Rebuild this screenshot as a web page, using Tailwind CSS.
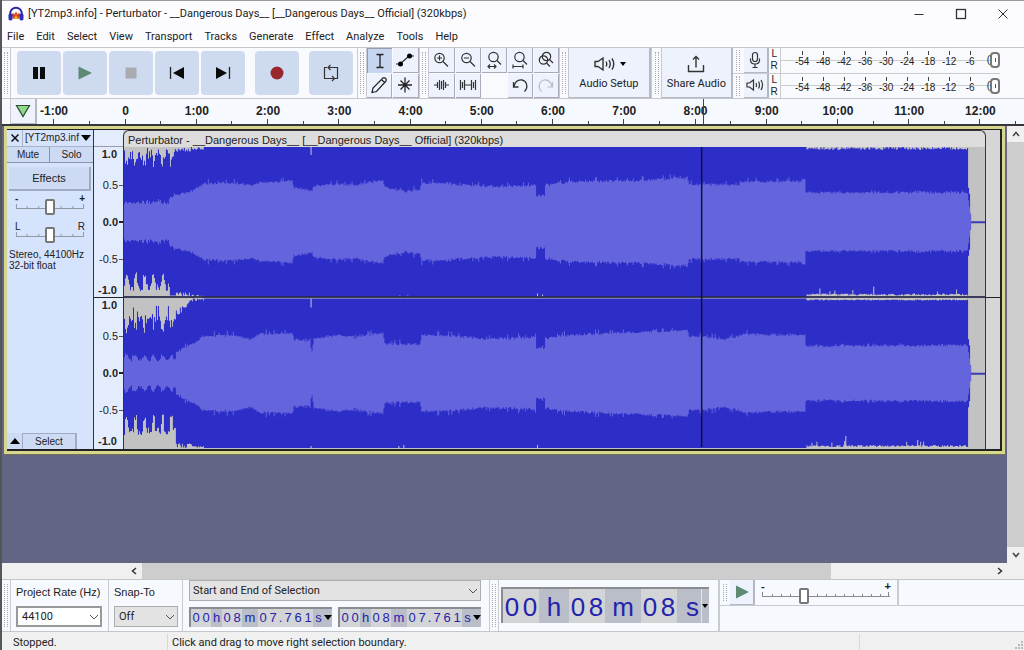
<!DOCTYPE html>
<html lang="en">
<head>
    <meta charset="UTF-8">
    <meta name="viewport" content="width=device-width, initial-scale=1.0">
    <title>[YT2mp3.info] - Perturbator - __Dangerous Days__</title>
    <script src="https://cdn.jsdelivr.net/npm/@tailwindcss/browser@4"></script>
</head>
<body class="h-screen flex flex-col overflow-hidden bg-[#fcfcfe] font-[Roboto,sans-serif] text-[11px] leading-4 text-[#222] border-l-2 border-[#55565c]">

<!-- Title bar -->
<header class="h-[27px] flex items-center shrink-0 border-t border-[#999]">
    <svg class="w-4 h-4 ml-1.5 mr-1" viewBox="0 0 16 16">
        <path d="M3 8h10v3l-2 2H5l-2-2z" fill="#f3a52c"/>
        <path d="M3 10l2-2 1 3 2-4 2 4 1-3 2 2" fill="none" stroke="#d8341f" stroke-width="1.3"/>
        <path d="M2.2 9V7.5a5.8 5.8 0 0 1 11.600 0V9" fill="none" stroke="#2326a0" stroke-width="2"/>
        <rect x="0.500" y="7.500" width="4" height="7" rx="1.800" fill="#2a2fc0"/>
        <rect x="11.500" y="7.500" width="4" height="7" rx="1.800" fill="#2a2fc0"/>
    </svg>
    <h1 class="flex-1 whitespace-nowrap">[YT2mp3.info] - Perturbator - __Dangerous Days__ [__Dangerous Days__ Official] (320kbps)</h1>
    <button class="w-[42px] h-full flex items-center justify-center" aria-label="Minimize"><svg class="w-3 h-3" viewBox="0 0 12 12"><path d="M1.500 6.500h9" stroke="#333" fill="none"/></svg></button>
    <button class="w-[42px] h-full flex items-center justify-center" aria-label="Maximize"><svg class="w-3 h-3" viewBox="0 0 12 12"><rect x="1.500" y="1.500" width="9" height="9" stroke="#333" stroke-width="1.300" fill="none"/></svg></button>
    <button class="w-[42px] h-full flex items-center justify-center" aria-label="Close"><svg class="w-3 h-3" viewBox="0 0 12 12"><path d="M1.500 1.500l9 9M10.500 1.500l-9 9" stroke="#333" fill="none"/></svg></button>
</header>

<!-- Menu -->
<nav class="h-5 flex items-center gap-3 pl-[5px] shrink-0">
    <button>File</button>
    <button>Edit</button>
    <button>Select</button>
    <button>View</button>
    <button>Transport</button>
    <button>Tracks</button>
    <button>Generate</button>
    <button>Effect</button>
    <button>Analyze</button>
    <button>Tools</button>
    <button>Help</button>
</nav>

<!-- Toolbars -->
<div class="h-[52px] flex shrink-0 border-y border-[#c4c6ca] bg-[#f9fafd]">
    <div class="w-[9px] border-r border-[#c9cbd0] flex justify-center py-1"><div class="w-1 border-x border-dotted border-[#aaa]"></div></div>
    <div class="flex gap-0.5 pl-1.5 items-center w-[348px]">
        <button class="w-11 h-11 rounded-sm bg-[#cedaf0] flex items-center justify-center" aria-label="Pause"><svg class="w-5 h-5" viewBox="0 0 20 20"><path d="M4 4h5v12H4zM11 4h5v12h-5z" fill="#0a0a0a"/></svg></button>
        <button class="w-11 h-11 rounded-sm bg-[#cedaf0] flex items-center justify-center" aria-label="Play"><svg class="w-5 h-5" viewBox="0 0 20 20"><path d="M3.500 3.500L17 10 3.500 16.500z" fill="#5d8a74"/></svg></button>
        <button class="w-11 h-11 rounded-sm bg-[#cedaf0] flex items-center justify-center" aria-label="Stop"><svg class="w-5 h-5" viewBox="0 0 20 20"><path d="M4.500 4.500h11v11h-11z" fill="#a9abb1"/></svg></button>
        <button class="w-11 h-11 rounded-sm bg-[#cedaf0] flex items-center justify-center" aria-label="Skip to start"><svg class="w-5 h-5" viewBox="0 0 20 20"><path d="M3.500 4v12" stroke="#222" stroke-width="1.300"/><path d="M17 4v12L6 10z" fill="#0a0a0a"/></svg></button>
        <button class="w-11 h-11 rounded-sm bg-[#cedaf0] flex items-center justify-center" aria-label="Skip to end"><svg class="w-5 h-5" viewBox="0 0 20 20"><path d="M16.500 4v12" stroke="#222" stroke-width="1.300"/><path d="M3 4v12l11-6z" fill="#0a0a0a"/></svg></button>
        <button class="w-11 h-11 rounded-sm bg-[#cedaf0] flex items-center justify-center ml-2" aria-label="Record"><svg class="w-5 h-5" viewBox="0 0 20 20"><circle cx="10" cy="10" r="6.500" fill="#98282b"/></svg></button>
        <button class="w-11 h-11 rounded-sm bg-[#cedaf0] flex items-center justify-center ml-2" aria-label="Loop"><svg class="w-5 h-5" viewBox="0 0 20 20" fill="none" stroke="#333" stroke-width="1.200"><path d="M6 4.500H3.500v11H13M7.500 4.500h9v11H14M9.500 2L7 4.500 9.500 7M11 13l2.500 2.500L11 18"/></svg></button>
    </div>
    <div class="w-[10px] border-x border-[#c9cbd0] flex justify-center py-1"><div class="w-1 border-x border-dotted border-[#aaa]"></div></div>

    <!-- Tools -->
    <div class="grid grid-cols-2 grid-rows-2 gap-px w-[52px]">
        <button class="flex items-center justify-center bg-[#c6d5f0] border-t border-l border-[#99a]" aria-label="Selection tool"><svg class="w-5 h-5" viewBox="0 0 20 20" fill="none" stroke="#222" stroke-width="1.300"><path d="M6.500 3.500h2.500l1 1 1-1h2.500M6.500 16.500h2.500l1-1 1 1h2.500M10 4.500v11"/></svg></button>
        <button class="flex items-center justify-center bg-[#edf2fd] border-r border-b border-[#aab]" aria-label="Envelope tool"><svg class="w-5 h-5" viewBox="0 0 20 20"><path d="M1 14h4l9-8h5" stroke="#222" stroke-width="1.200" fill="none"/><circle cx="5.500" cy="14" r="2.500"/><circle cx="14.500" cy="6" r="2.500"/></svg></button>
        <button class="flex items-center justify-center bg-[#edf2fd] border-r border-b border-[#aab]" aria-label="Draw tool"><svg class="w-5 h-5" viewBox="0 0 20 20" fill="none" stroke="#222" stroke-width="1.200"><path d="M3 17.500l1-4.500L14 3q1-.8 2 0l1 1q.8 1 0 2L7.500 16.500zM12.500 4.500L15.500 7.500"/></svg></button>
        <button class="flex items-center justify-center bg-[#edf2fd] border-r border-b border-[#aab]" aria-label="Multi-tool"><svg class="w-5 h-5" viewBox="0 0 20 20" fill="none" stroke="#222" stroke-width="1.300"><path d="M10 2.500v15M3 10h14M5.500 5.500l9 9M14.500 5.500l-9 9"/></svg></button>
    </div>
    <div class="w-[11px] border-x border-[#c9cbd0] flex justify-center py-1"><div class="w-1 border-x border-dotted border-[#aaa]"></div></div>

    <!-- Edit -->
    <div class="grid grid-cols-5 grid-rows-2 gap-px w-[130px]">
        <button class="flex items-center justify-center bg-[#edf2fd] border-r border-b border-[#aab]" aria-label="Zoom in"><svg class="w-5 h-5" viewBox="0 0 20 20" fill="none" stroke="#333" stroke-width="1.200"><circle cx="8.500" cy="8" r="4.700"/><path d="M12 11.500l5 5M6 8h5M8.500 5.500v5"/></svg></button>
        <button class="flex items-center justify-center bg-[#edf2fd] border-r border-b border-[#aab]" aria-label="Zoom out"><svg class="w-5 h-5" viewBox="0 0 20 20" fill="none" stroke="#333" stroke-width="1.200"><circle cx="8.500" cy="8" r="4.700"/><path d="M12 11.500l5 5M6 8h5"/></svg></button>
        <button class="flex items-center justify-center bg-[#edf2fd] border-r border-b border-[#aab]" aria-label="Fit selection"><svg class="w-5 h-5" viewBox="0 0 20 20" fill="none" stroke="#333" stroke-width="1.200"><circle cx="9.500" cy="7" r="4.700"/><path d="M13 10.500l4 4M4 16.500h8M6 14.500l-2 2 2 2M10 14.500l2 2-2 2"/></svg></button>
        <button class="flex items-center justify-center bg-[#edf2fd] border-r border-b border-[#aab]" aria-label="Fit project"><svg class="w-5 h-5" viewBox="0 0 20 20" fill="none" stroke="#333" stroke-width="1.200"><circle cx="9.500" cy="7" r="4.700"/><path d="M13 10.500l4 4M3 16.500h10M3 14.500v4M13 14.500v4"/></svg></button>
        <button class="flex items-center justify-center bg-[#edf2fd] border-r border-b border-[#aab]" aria-label="Zoom toggle"><svg class="w-5 h-5" viewBox="0 0 20 20" fill="none" stroke="#333" stroke-width="1.200"><circle cx="7.500" cy="10" r="4.200"/><circle cx="10.500" cy="6.500" r="4.200"/><path d="M10.500 13l3.500 3.500M13.500 9.500L17 13"/></svg></button>
        <button class="flex items-center justify-center bg-[#edf2fd] border-r border-b border-[#aab]" aria-label="Trim"><svg class="w-5 h-5" viewBox="0 0 20 20" fill="none" stroke="#333" stroke-width="1.200"><path d="M3 10h3M14 10h4M6.500 7v6M8.500 5v10M10.500 6v8M12.500 5v10M14.500 7v6"/></svg></button>
        <button class="flex items-center justify-center bg-[#edf2fd] border-r border-b border-[#aab]" aria-label="Silence"><svg class="w-5 h-5" viewBox="0 0 20 20" fill="none" stroke="#333" stroke-width="1.200"><path d="M2.500 5v10M4.500 7v6M6.500 5v10M6.500 10h7M13.500 5v10M15.500 7v6M17.500 5v10"/></svg></button>
        <span></span>
        <button class="flex items-center justify-center bg-[#edf2fd] border-r border-b border-[#aab]" aria-label="Undo"><svg class="w-5 h-5" viewBox="0 0 20 20" fill="none" stroke="#333" stroke-width="1.300"><path d="M3.500 7v5h5M4 11.500C5 7 8 4.500 12 5c5 1 6.500 7.500 2.500 11.500"/></svg></button>
        <button class="flex items-center justify-center bg-[#edf2fd] border-r border-b border-[#aab]" aria-label="Redo"><svg class="w-5 h-5" viewBox="0 0 20 20" fill="none" stroke="#b9bcc4" stroke-width="1.200"><path d="M16.500 7v5h-5M16 11.500C15 7 12 4.500 8 5c-5 1-6.500 7.500-2.500 11.500"/></svg></button>
    </div>
    <div class="w-[10px] border-x border-[#c9cbd0] flex justify-center py-1"><div class="w-1 border-x border-dotted border-[#aaa]"></div></div>
    <button class="w-[83px] bg-[#edf2fd] border-r-2 border-b border-[#b4b8c4] flex flex-col items-center justify-center gap-0.5">
        <span class="flex items-center gap-1"><svg class="w-6 h-5" viewBox="0 0 24 20" fill="none" stroke="#333" stroke-width="1.400"><path d="M3 7.500h3L11 4v12l-5-3.500H3zM14 7.500q1.500 2.500 0 5M17 6q2.500 4 0 8M20 4.500q3.500 5.500 0 11"/></svg><svg class="w-1.5 h-1.5" viewBox="0 0 6 6"><path d="M0 1h6L3 5z"/></svg></span>
        <span>Audio Setup</span>
    </button>
    <div class="w-[11px] border-x border-[#c9cbd0] flex justify-center py-1"><div class="w-1 border-x border-dotted border-[#aaa]"></div></div>
    <button class="w-[71px] bg-[#edf2fd] border-r-2 border-b border-[#b4b8c4] flex flex-col items-center justify-center gap-0.5">
        <svg class="w-5 h-5" viewBox="0 0 20 20" fill="none" stroke="#333" stroke-width="1.400"><path d="M2.500 11v6.500h15V11M10 13.500V2.500M7 5.500l3-3 3 3"/></svg>
        <span class="whitespace-nowrap">Share Audio</span>
    </button>

    <!-- Meters -->
    <div class="flex-1 flex flex-col pr-6">
        <div class="flex-1 flex border-b border-[#c9cbd0]">
            <div class="w-[11px] flex justify-center py-0.5"><div class="w-1 border-x border-dotted border-[#aaa]"></div></div>
            <button class="w-[25px] bg-[#edf2fd] border-r-2 border-b border-[#b4b8c4] flex items-center justify-center" aria-label="Record meter"><svg class="w-5 h-5" viewBox="0 0 20 20" fill="none" stroke="#333" stroke-width="1.200"><rect x="7.500" y="2.500" width="5" height="9" rx="2.500"/><path d="M5.500 8.500v1.500q0 4 4.500 4t4.500-4V8.500M10 14v3M7.500 17.500h5"/></svg></button>
            <span class="w-[11px] flex flex-col justify-center text-center font-['Liberation_Sans',sans-serif] text-[10px] leading-[12px]"><span>L</span><span>R</span></span>
            <div class="meter flex-1 grid items-center border-l border-[#ccc]"></div>
        </div>
        <div class="flex-1 flex">
            <div class="w-[11px] flex justify-center py-0.5"><div class="w-1 border-x border-dotted border-[#aaa]"></div></div>
            <button class="w-[25px] bg-[#edf2fd] border-r-2 border-b border-[#b4b8c4] flex items-center justify-center" aria-label="Playback meter"><svg class="w-5 h-5" viewBox="0 0 20 20" fill="none" stroke="#333" stroke-width="1.200"><path d="M2 8h2.500L8.500 5v10l-4-3H2zM11 8q1 2 0 4M13.500 6.500q2 3.500 0 7M16 5q3 5 0 10"/></svg></button>
            <span class="w-[11px] flex flex-col justify-center text-center font-['Liberation_Sans',sans-serif] text-[10px] leading-[12px]"><span>L</span><span>R</span></span>
            <div class="meter flex-1 grid items-center border-l border-[#ccc]"></div>
        </div>
    </div>
</div>

<!-- Timeline ruler -->
<div class="relative h-[27px] flex shrink-0 bg-[#f6f9fe] border-b-2 border-[#35363b] font-['Liberation_Sans',sans-serif] font-bold text-[12px]">
    <div class="w-[9px] border-r border-[#c9cbd0]"></div>
    <button class="w-[26px] flex items-center justify-center bg-[#edf2fd] border-r-2 border-b border-[#b4b8c4]" aria-label="Timeline options"><svg class="w-4 h-4" viewBox="0 0 16 16"><path d="M1.500 2.500h13L8 13.500z" fill="#8fd98a" stroke="#2c4a30" stroke-width="1.200"/></svg></button>
    <div id="timeline" class="flex-1 flex pr-2"></div>
    <div class="absolute inset-y-0 left-[68.6%] w-px bg-[#444]"></div>
</div>

<!-- Tracks -->
<main class="flex-1 flex min-h-0 bg-[#636585]">
    <div class="flex-1 min-w-0">
        <section class="ml-0.5 mr-0.5 flex h-[328px] border-3 border-[#d6d78c] bg-[#d6d6d6] font-['Liberation_Sans',sans-serif] outline outline-[#6e6f55]">
            <div class="flex-1 flex border-y border-r-2 border-[#222] border-b-2 min-w-0">
                <!-- Track controls -->
                <div class="w-[87px] bg-[#d6e3fd] flex flex-col text-[10px] leading-3 border-r border-[#333]">
                    <div class="h-[17px] flex border-b border-[#aab4c8]">
                        <button class="w-4 flex items-center justify-center border-r border-[#aab4c8]" aria-label="Close track"><svg class="w-2 h-2" viewBox="0 0 8 8"><path d="M.5.5l7 7M7.500.5l-7 7" stroke="#111" stroke-width="1.500"/></svg></button>
                        <button class="flex-1 flex items-center justify-between pl-0.5 pr-0.5 whitespace-nowrap">[YT2mp3.inf <svg class="w-2.5 h-1.5" viewBox="0 0 10 6"><path d="M0 0h10L5 6z"/></svg></button>
                    </div>
                    <div class="h-4 grid grid-cols-2 border-b border-[#8c95a8] bg-[#cddaf3]">
                        <button class="border-r border-[#8c95a8]">Mute</button>
                        <button>Solo</button>
                    </div>
                    <button class="mt-1 ml-0.5 mr-0.5 h-6 bg-[#cddaf3] border-r-2 border-b-2 border-[#9fabc4] text-[11px]">Effects</button>
                    <label class="mt-1 mx-2 grid grid-rows-[4px_16px]">
                        <span class="flex justify-between font-bold leading-2"><span>-</span><span>+</span></span>
                        <span class="grid items-center">
                            <svg class="[grid-area:1/1] w-full h-4" viewBox="0 0 72 16" preserveAspectRatio="none"><path d="M1 9.500h70M1.500 5v4M12.500 7v2M24.500 7v2M47.500 7v2M59.500 7v2M70.500 5v4" stroke="#8f97a8" fill="none"/></svg>
                            <input type="range" value="50" aria-label="Gain" class="[grid-area:1/1] w-full h-4 appearance-none bg-transparent [&::-webkit-slider-thumb]:appearance-none [&::-webkit-slider-thumb]:w-2.5 [&::-webkit-slider-thumb]:h-4 [&::-webkit-slider-thumb]:bg-white [&::-webkit-slider-thumb]:border-2 [&::-webkit-slider-thumb]:border-[#777] [&::-webkit-slider-thumb]:rounded-xs">
                        </span>
                    </label>
                    <label class="mt-2 mx-2 grid grid-rows-[4px_16px]">
                        <span class="flex justify-between leading-2"><span>L</span><span>R</span></span>
                        <span class="grid items-center">
                            <svg class="[grid-area:1/1] w-full h-4" viewBox="0 0 72 16" preserveAspectRatio="none"><path d="M1 9.500h70M1.500 5v4M12.500 7v2M24.500 7v2M47.500 7v2M59.500 7v2M70.500 5v4" stroke="#8f97a8" fill="none"/></svg>
                            <input type="range" value="50" aria-label="Pan" class="[grid-area:1/1] w-full h-4 appearance-none bg-transparent [&::-webkit-slider-thumb]:appearance-none [&::-webkit-slider-thumb]:w-2.5 [&::-webkit-slider-thumb]:h-4 [&::-webkit-slider-thumb]:bg-white [&::-webkit-slider-thumb]:border-2 [&::-webkit-slider-thumb]:border-[#777] [&::-webkit-slider-thumb]:rounded-xs">
                        </span>
                    </label>
                    <p class="mt-1.5 pl-0.5 leading-[11px] whitespace-nowrap">Stereo, 44100Hz<br>32-bit float</p>
                    <div class="mt-auto h-4 flex">
                        <button class="w-4 flex items-center justify-center border-r border-[#9fabc4] bg-[#cddaf3]" aria-label="Collapse"><svg class="w-2.5 h-1.5" viewBox="0 0 10 6"><path d="M0 6h10L5 0z"/></svg></button>
                        <button class="w-[54px] bg-[#cddaf3] border-r-2 border-t border-[#9fabc4]">Select</button>
                    </div>
                </div>
                <!-- Amplitude ruler -->
                <div class="w-[29px] bg-[#e3ecfd] flex flex-col text-[11px]">
                    <div class="h-[17px] border-b border-[#99a]"></div>
                    <div class="vruler h-[151px] border-b border-[#222]"></div>
                    <div class="vruler flex-1"></div>
                </div>
                <!-- Clip -->
                <div class="flex-1 min-w-0 flex flex-col rounded-t-md border-x border-t border-[#333] bg-[#dcdcdc] overflow-hidden">
                    <div class="h-4 pl-1 text-[11px] leading-[18px] whitespace-nowrap">Perturbator - __Dangerous Days__ [__Dangerous Days__ Official] (320kbps)</div>
                    <svg id="wave" class="w-full flex-1 min-h-0 bg-[#c2c2c2]" viewBox="0 0 863 303" preserveAspectRatio="none">
                        <path id="peaks" fill="#2d2dc8"/>
                        <path id="rms" fill="#6464dc"/>
                        <path d="M849 75.500h14M849 227.500h14" stroke="#3a3cb4" stroke-width="2"/>
                        <path id="flecks" stroke="#c6c8d8" fill="none"/>
                        <path d="M0 150.500h863M579 0v301" stroke="#11113a" stroke-width="1.500"/>
                    </svg>
                </div>
                <div class="w-[14px] flex flex-col"><div class="h-[168px] border-b border-[#222]"></div></div>
            </div>
        </section>
    </div>
    <div class="w-[17px] bg-[#f0f0f0] flex flex-col shrink-0">
        <button class="h-4 flex items-center justify-center" aria-label="Scroll up"><svg class="w-2 h-2" viewBox="0 0 8 8"><path d="M1 6l3-3.500L7 6" stroke="#444" stroke-width="1.500" fill="none"/></svg></button>
        <div class="flex-1 bg-[#cdcdcd]"></div>
        <button class="h-4 flex items-center justify-center" aria-label="Scroll down"><svg class="w-2 h-2" viewBox="0 0 8 8"><path d="M1 2l3 3.500L7 2" stroke="#444" stroke-width="1.500" fill="none"/></svg></button>
    </div>
</main>

<!-- Horizontal scrollbar -->
<div class="h-4 flex shrink-0 bg-[#f0f0f0] pl-[124px] pr-4">
    <button class="w-4 flex items-center justify-center" aria-label="Scroll left"><svg class="w-2 h-2" viewBox="0 0 8 8"><path d="M6 1L2.500 4 6 7" stroke="#333" stroke-width="1.500" fill="none"/></svg></button>
    <div class="flex-1 flex"><div class="w-[81%] bg-[#cdcdcd]"></div></div>
    <button class="w-4 flex items-center justify-center" aria-label="Scroll right"><svg class="w-2 h-2" viewBox="0 0 8 8"><path d="M2 1l3.500 3L2 7" stroke="#333" stroke-width="1.500" fill="none"/></svg></button>
</div>

<!-- Bottom toolbars -->
<div class="h-[53px] flex shrink-0 border-y border-[#c4c6ca] bg-[#f6f9fe]">
    <div class="w-[9px] border-r border-[#c9cbd0] flex justify-center py-1"><div class="w-1 border-x border-dotted border-[#aaa]"></div></div>
    <div class="w-[92px] ml-[5px] flex flex-col justify-between pt-1 pb-1">
        <label for="rate" class="whitespace-nowrap font-['Liberation_Sans',sans-serif] text-[11px]">Project Rate (Hz)</label>
        <span class="grid items-center w-[86px]">
            <select id="rate" class="[grid-area:1/1] appearance-none h-[21px] w-full pl-1 bg-white border-2 border-[#999]"><option>44100</option></select>
            <svg class="[grid-area:1/1] w-2 h-2 justify-self-end mr-1 pointer-events-none" viewBox="0 0 8 8"><path d="M0 2l4 4 4-4" stroke="#555" fill="none"/></svg>
        </span>
    </div>
    <div class="w-[74px] flex flex-col justify-between pt-1 pb-1 border-l border-[#c9cbd0] pl-[5px]">
        <label for="snap" class="font-['Liberation_Sans',sans-serif] text-[11px]">Snap-To</label>
        <span class="grid items-center w-[64px]">
            <select id="snap" class="[grid-area:1/1] appearance-none h-[21px] w-full pl-1 bg-[#e3e3e3] border border-[#adadad]"><option>Off</option></select>
            <svg class="[grid-area:1/1] w-2 h-2 justify-self-end mr-1 pointer-events-none" viewBox="0 0 8 8"><path d="M0 2l4 4 4-4" stroke="#555" fill="none"/></svg>
        </span>
    </div>
    <div class="w-[307px] border-l border-[#c9cbd0] pl-1.5 pr-2 pb-1 flex flex-col justify-between">
        <span class="grid items-center">
            <select aria-label="Selection mode" class="[grid-area:1/1] appearance-none h-[21px] w-full pl-[3px] bg-[#e3e3e3] border border-[#adadad]"><option>Start and End of Selection</option></select>
            <svg class="[grid-area:1/1] w-2 h-2 justify-self-end mr-1 pointer-events-none" viewBox="0 0 8 8"><path d="M0 2l4 4 4-4" stroke="#555" fill="none"/></svg>
        </span>
        <span class="flex justify-between">
            <span class="time"></span>
            <span class="time"></span>
        </span>
    </div>
    <div class="w-[10px] border-x border-[#c9cbd0] flex justify-center py-1"><div class="w-1 border-x border-dotted border-[#aaa]"></div></div>
    <!-- Time display -->
    <div class="w-[221px] pl-0.5 pb-0.5 flex items-center border-r-2 border-[#c9cbd0]">
        <div class="flex h-9 border-t-2 border-l-2 border-[#8a8c92] bg-[#b9bec9] font-['Liberation_Sans',sans-serif] text-[26px] leading-[36px] text-[#2323ab] text-center">
            <span class="w-[18px] bg-[#d3d4d6]">0</span><span class="w-[18px] bg-[#d3d4d6]">0</span><span class="w-[30px]">h</span>
            <span class="w-[18px] bg-[#d3d4d6]">0</span><span class="w-[18px] bg-[#d3d4d6]">8</span><span class="w-9">m</span>
            <span class="w-[18px] bg-[#d3d4d6]">0</span><span class="w-[18px] bg-[#d3d4d6]">8</span><span class="w-6 text-right pr-0.5">s</span>
            <button class="w-2 border-l border-[#e3e5ea] flex items-center" aria-label="Time format"><svg class="w-1.5 h-1.5" viewBox="0 0 6 6"><path d="M0 1h6L3 5z"/></svg></button>
        </div>
    </div>
    <!-- Playback speed -->
    <div class="flex-1">
        <div class="h-[26px] flex border-b border-[#c9cbd0]">
            <div class="w-2.5 flex justify-center py-1"><div class="w-1 border-x border-dotted border-[#aaa]"></div></div>
            <button class="w-[25px] flex items-center justify-center bg-[#edf2fd] border-r-2 border-b border-[#b4b8c4]" aria-label="Play at speed"><svg class="w-4 h-4" viewBox="0 0 16 16"><path d="M2 1.500L15 8 2 14.500z" fill="#5d8a74"/></svg></button>
            <label class="w-[144px] pl-1.5 pr-1.5 pt-0.5 border-r-2 border-[#c9cbd0] grid grid-rows-[6px_16px]">
                <span class="flex justify-between font-['Liberation_Sans',sans-serif] font-bold leading-2"><span>-</span><span>+</span></span>
                <span class="grid items-center">
                    <svg class="[grid-area:1/1] w-full h-4" viewBox="0 0 130 16" preserveAspectRatio="none"><path d="M1 8.500h128M1.500 4v4M11.500 6v2M20.500 6v2M29.500 6v2M56.500 6v2M65.500 6v2M74.500 6v2M83.500 6v2M92.500 6v2M101.500 6v2M110.500 6v2M119.500 6v2M127.500 4v4" stroke="#888" fill="none"/></svg>
                    <input type="range" value="32" aria-label="Playback speed" class="[grid-area:1/1] w-full h-4 appearance-none bg-transparent [&::-webkit-slider-thumb]:appearance-none [&::-webkit-slider-thumb]:w-2.5 [&::-webkit-slider-thumb]:h-4 [&::-webkit-slider-thumb]:bg-white [&::-webkit-slider-thumb]:border-2 [&::-webkit-slider-thumb]:border-[#777] [&::-webkit-slider-thumb]:rounded-xs">
                </span>
            </label>
        </div>
    </div>
</div>

<!-- Status bar -->
<footer class="h-[18px] flex items-end shrink-0 bg-[#f0f0f0]">
    <span class="w-[166px] pl-[11px] border-r border-[#d8d8d8] h-4 leading-[18px]">Stopped.</span>
    <span class="flex-1 pl-1 h-4 leading-[18px]">Click and drag to move right selection boundary.</span>
    <span class="w-[165px] border-l border-[#d8d8d8] h-4 flex justify-end items-end"><svg class="w-3 h-3" viewBox="0 0 12 12"><path d="M9 3h2v2H9zM9 6h2v2H9zM6 6h2v2H6zM9 9h2v2H9zM6 9h2v2H6zM3 9h2v2H3z" fill="#bbb"/></svg></span>
</footer>

<script>
    // Meter scales
    document.querySelectorAll('.meter').forEach(meter => {
        const labels = [-54, -48, -42, -36, -30, -24, -18, -12, -6].map(db => `
            <span class="w-[21px] flex flex-col items-center"><i class="w-px h-1 bg-[#444]"></i><span class="leading-[14px]">${db}</span></span>`).join('');
        meter.innerHTML = `
            <div class="[grid-area:1/1] h-px bg-[#ccc]"></div>
            <div class="[grid-area:1/1] flex items-center pl-[11px] font-['Liberation_Sans',sans-serif] text-[10px]">${labels}
                <span class="pl-1.5">(</span><span class="w-2.5 h-4 rounded-sm border-2 border-[#777] bg-white flex items-center justify-center"><i class="w-px h-1 bg-[#555]"></i></span>
            </div>`;
    });

    // Timeline, one cell for each minute
    const cells = ['<div class="w-[53px] flex flex-col justify-between pt-1"><span class="pl-[3px]">-1:00</span><span class="flex items-end"><i class="w-4"></i><i class="w-px h-[5px] bg-[#444]"></i><i class="flex-1"></i><i class="w-px h-[3px] bg-[#444]"></i></span></div>'];
    for (let m = 0; m <= 12; m++) {
        cells.push(`<div class="flex-1 flex flex-col justify-between pt-1 text-center"><span>${m ? m + ':00' : '0'}</span><span class="flex items-end"><i class="flex-1"></i><i class="w-px h-[5px] bg-[#444]"></i><i class="flex-1"></i><i class="w-px h-[3px] bg-[#444]"></i></span></div>`);
    }
    document.getElementById('timeline').innerHTML = cells.join('');

    // Amplitude scales
    document.querySelectorAll('.vruler').forEach(ruler => {
        ruler.innerHTML = `
            <div class="h-[14px] pr-1.5 flex items-center justify-end font-bold">1.0</div>
            <div class="h-12 flex items-center justify-end gap-px">0.5<i class="w-1 h-px bg-[#555]"></i></div>
            <div class="h-[26px] flex items-center justify-end gap-px font-bold">0.0<i class="w-1 h-0.5 bg-[#222]"></i></div>
            <div class="h-12 flex items-center justify-end gap-px">-0.5<i class="w-1 h-px bg-[#555]"></i></div>
            <div class="h-[14px] pr-1.5 flex items-center justify-end font-bold">-1.0</div>`;
    });

    // Selection start and end
    document.querySelectorAll('.time').forEach(el => {
        el.className = "time flex h-5 border-t-2 border-l-2 border-[#8a8c92] bg-[#b9bec9] font-['Liberation_Sans',sans-serif] text-[13px] leading-[18px] text-[#2323ab] text-center";
        el.innerHTML = [...'00h08m07.761s'].map(c => {
            if (c === 'm') return '<span class="w-4">m</span>';
            if (c === '.') return '<span class="w-[5px] bg-[#d3d4d6]">.</span>';
            if (c === 'h' || c === 's') return `<span class="w-[11px]">${c}</span>`;
            return `<span class="w-[10px] bg-[#d3d4d6]">${c}</span>`;
        }).join('') + '<button class="w-2 flex items-center" aria-label="Time format"><svg class="w-2 h-1.5" viewBox="0 0 8 6"><path d="M0 0h8L4 5z"/></svg></button>';
    });

    // Waveform
    let seed = 7;
    const rand = () => (seed = (seed * 16807) % 2147483647) / 2147483647;
    const levels = [
        [[0, 17], [44, 17], [46, 23], [66, 29], [80, 37], [111, 38], [126, 35], [136, 38], [168, 40], [170, 33], [188, 30], [190, 34], [216, 37], [231, 35], [241, 38], [259, 40], [261, 33], [281, 29], [296, 31], [298, 38], [316, 37], [376, 34], [412, 35], [413, 25], [421, 25], [422, 35], [446, 39], [516, 40], [564, 43], [566, 36], [616, 36], [621, 39], [676, 39], [682, 42], [683, 28], [845, 28], [847, 15], [849, 0], [863, 0]],
        [[0, 14], [50, 14], [54, 21], [66, 27], [80, 36], [111, 37], [126, 33], [136, 38], [168, 39], [170, 33], [186, 31], [187, 22], [188, 22], [190, 33], [216, 37], [231, 34], [241, 37], [259, 39], [261, 28], [296, 28], [298, 37], [316, 37], [366, 33], [412, 35], [413, 24], [421, 24], [422, 34], [446, 37], [516, 40], [564, 42], [566, 36], [606, 33], [621, 38], [682, 37], [683, 26], [845, 27], [847, 15], [849, 0], [863, 0]]
    ];
    const at = (points, x) => {
        let i = 1;
        while (points[i][0] < x) i++;
        const [x0, y0] = points[i - 1], [x1, y1] = points[i];
        return y0 + (y1 - y0) * (x - x0) / (x1 - x0);
    };
    let peaks = '', rms = '', flecks = '';
    levels.forEach((points, ch) => {
        const mid = ch ? 227 : 75;
        for (let x = 0; x < 849; x++) {
            let h = at(points, x);
            if (x < 52) h += ch ? 2.5 * Math.sin(x * 0.7) : rand() * 2;
            const steady = (x > 412 && x < 422) || x > 683;
            const n = x < 845 ? (rand() < 0.2 ? rand() * (steady ? 4 : 6) : rand() * 2.5) : 0;
            rms += `M${x} ${mid - h - n}h1.050V${mid + h + n}h-1.050z`;

            let top = 75, bottom = 75;
            if (x < 52) {
                const lump = Math.max(0, Math.sin(x * 0.7));
                top -= ch ? 17 + 14 * lump + rand() * 6 - (rand() < 0.15 ? 12 : 0) : 1 + 10 * lump + rand() * 12;
                bottom -= ch ? 12 + 16 * lump + rand() * 9 : (x < 46 ? 5 + 14 * lump + rand() * 8 : 1);
            } else if (x < 68) {
                top -= ch ? 12 * (68 - x) / 16 + rand() * 6 : rand() * 5;
                bottom -= rand() * 5;
            } else if (x < 80) {
                top -= rand() * 3;
                bottom -= rand() * 2;
            } else if (x > 683 && x < 845) {
                top -= ch ? 1 + rand() : rand() * 3;
                bottom -= 1 + rand() * 2 + (rand() < 0.04 ? 4 : 0);
            } else if (x >= 845) {
                top = bottom = [74, 34, 28, 8][x - 845];
            }
            peaks += `M${x} ${mid - top}h1.050V${mid + bottom}h-1.050z`;
        }
    });
    [[187.5, 0, 8], [187.5, 152, 9], [187.5, 300, 3], [751.5, 140, 10], [697.5, 142, 8], [723.5, 290, 11], [722.5, 295, 6], [795.5, 294, 7], [414.5, 147, 4], [419.5, 148, 3], [414.5, 299, 4], [276.5, 149, 2], [284.5, 149, 2], [275.5, 300, 3], [280.5, 299, 4]].forEach(([x, y, len]) => {
        flecks += `M${x} ${y}v${len}`;
    });
    document.getElementById('peaks').setAttribute('d', peaks);
    document.getElementById('rms').setAttribute('d', rms);
    document.getElementById('flecks').setAttribute('d', flecks);
</script>
</body>
</html>
